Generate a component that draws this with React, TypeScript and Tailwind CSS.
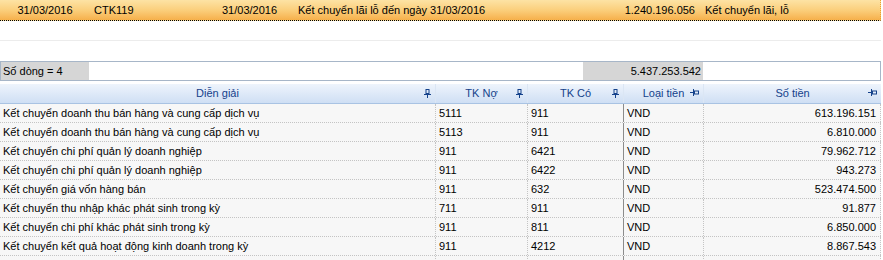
import React from "react";

const font = { fontFamily: '"Liberation Sans", Arial, sans-serif' };

const rows: [string, string, string, string, string][] = [
  ["Kết chuyển doanh thu bán hàng và cung cấp dịch vụ", "5111", "911", "VND", "613.196.151"],
  ["Kết chuyển doanh thu bán hàng và cung cấp dịch vụ", "5113", "911", "VND", "6.810.000"],
  ["Kết chuyển chi phí quản lý doanh nghiệp", "911", "6421", "VND", "79.962.712"],
  ["Kết chuyển chi phí quản lý doanh nghiệp", "911", "6422", "VND", "943.273"],
  ["Kết chuyển giá vốn hàng bán", "911", "632", "VND", "523.474.500"],
  ["Kết chuyển thu nhập khác phát sinh trong kỳ", "711", "911", "VND", "91.877"],
  ["Kết chuyển chi phí khác phát sinh trong kỳ", "911", "811", "VND", "6.850.000"],
  ["Kết chuyển kết quả hoạt động kinh doanh trong kỳ", "911", "4212", "VND", "8.867.543"],
];

function PinV() {
  return (
    <svg width="7" height="9" viewBox="0 0 7 9" className="shrink-0">
      <rect x="2" y="0.5" width="3" height="4" fill="none" stroke="#15428b" strokeWidth="1" />
      <rect x="0" y="5" width="7" height="1" fill="#15428b" />
      <rect x="3" y="6" width="1" height="3" fill="#15428b" />
    </svg>
  );
}

function PinH() {
  return (
    <svg width="9" height="7" viewBox="0 0 9 7" className="shrink-0">
      <rect x="0" y="3" width="3" height="1" fill="#15428b" />
      <rect x="3" y="0" width="1" height="7" fill="#15428b" />
      <rect x="4.5" y="2" width="4" height="3" fill="none" stroke="#15428b" strokeWidth="1" />
    </svg>
  );
}

function HeaderCell({ w, label, pin, last }: { w: string; label: string; pin: "v" | "h"; last?: boolean }) {
  return (
    <div className={`${w} relative flex h-full items-center justify-center ${last ? "" : "border-r border-[#dbe6f4]"}`}>
      <span>{label}</span>
      <span className="absolute right-[4px] top-[5px]">{pin === "v" ? <PinV /> : <PinH />}</span>
    </div>
  );
}

export default function App() {
  return (
    <div className="h-[260px] w-[883px] overflow-hidden bg-white text-[11px] text-black" style={font}>
      {/* top master row */}
      <div className="flex h-[21px] w-[881px] items-center border-b border-r border-dotted border-b-black border-r-[#e8a030] bg-gradient-to-b from-[#fde3a4] via-[#fbcf7c] to-[#f6b04a]">
        <div className="w-[90px] text-center">31/03/2016</div>
        <div className="w-[132px] pl-[4px]">CTK119</div>
        <div className="w-[76px]">31/03/2016</div>
        <div className="w-[260px]">Kết chuyển lãi lỗ đến ngày 31/03/2016</div>
        <div className="w-[141px] pr-[4px] text-right">1.240.196.056</div>
        <div className="flex-1 pl-[6px]">Kết chuyển lãi, lỗ</div>
      </div>
      <div className="h-[20px] w-[881px] border-b border-[#ececec]" />
      <div className="h-[20px] w-[881px]" />
      {/* summary */}
      <div className="flex h-[20px] w-[881px] border border-[#a7b6c8]">
        <div className="flex w-[88px] items-center bg-[#d6d6d6] pl-[2px]">Số dòng = 4</div>
        <div className="w-[494px] bg-white" />
        <div className="flex w-[120px] items-center justify-end bg-[#d6d6d6] pr-[2px]">5.437.253.542</div>
        <div className="flex-1 bg-white" />
      </div>
      <div className="h-[3px]" />
      {/* header */}
      <div className="flex h-[20px] w-[881px] border-b border-[#a9c3e3] bg-gradient-to-b from-[#eef4fc] to-[#cfdff4] text-[#15428b]">
        <HeaderCell w="w-[436px]" label="Diễn giải" pin="v" />
        <HeaderCell w="w-[92px]" label="TK Nợ" pin="v" />
        <HeaderCell w="w-[96px]" label="TK Có" pin="v" />
        <HeaderCell w="w-[80px]" label="Loại tiền" pin="h" />
        <HeaderCell w="w-[177px]" label="Số tiền" pin="h" last />
      </div>
      {/* data rows */}
      {rows.map((r, i) => (
        <div key={i} className="flex h-[19px] w-[881px] border-b border-dotted border-[#c4c4c4] bg-[#f7f7f7]">
          <div className="flex w-[436px] items-center border-r border-dotted border-[#c4c4c4] pl-[3px]">{r[0]}</div>
          <div className="flex w-[92px] items-center border-r border-dotted border-[#c4c4c4] pl-[3px]">{r[1]}</div>
          <div className="flex w-[96px] items-center border-r border-solid border-[#8c8c8c] pl-[3px]">{r[2]}</div>
          <div className="flex w-[80px] items-center border-r border-dotted border-[#c4c4c4] pl-[3px]">{r[3]}</div>
          <div className="flex w-[177px] items-center justify-end border-r border-dotted border-[#c4c4c4] pr-[4px]">{r[4]}</div>
        </div>
      ))}
      <div className="flex h-[19px] w-[881px] bg-[#f7f7f7]">
        <div className="w-[436px] border-r border-dotted border-[#c4c4c4]" />
        <div className="w-[92px] border-r border-dotted border-[#c4c4c4]" />
        <div className="w-[96px] border-r border-solid border-[#8c8c8c]" />
        <div className="w-[80px] border-r border-dotted border-[#c4c4c4]" />
        <div className="w-[177px] border-r border-dotted border-[#c4c4c4]" />
      </div>
    </div>
  );
}
